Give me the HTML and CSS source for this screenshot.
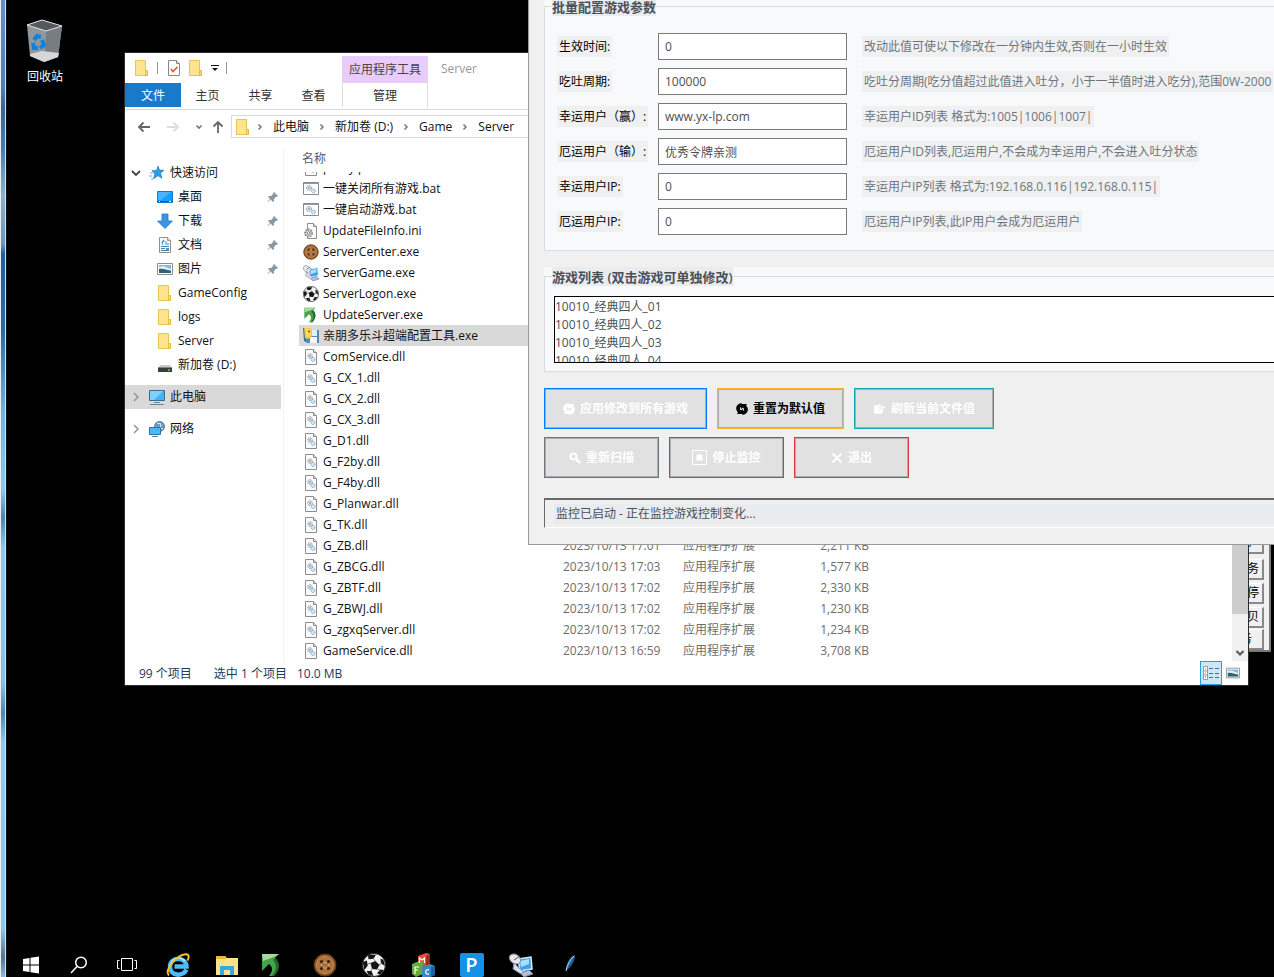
FILE: index.html
```
<!DOCTYPE html>
<html lang="zh-CN">
<head>
<meta charset="utf-8">
<title>Server</title>
<link rel="stylesheet" href="styles.css">
</head>
<body>
<svg class="sprite" aria-hidden="true">
  <symbol id="folder" viewBox="0 0 16 16"><path d="M1.500.500h10v10h2v5h-12z" fill="#ffe48f" stroke="#e8c455"/><path d="M11.500 10.500h2v5h-2z" fill="#ffdb6e" stroke="#e3bb48"/></symbol>
  <symbol id="chev" viewBox="0 0 8 8"><path d="M2.500 1.500L5 4 2.500 6.500" fill="none" stroke="#777" stroke-width="1.500"/></symbol>
  <symbol id="chev-big" viewBox="0 0 10 10"><path d="M3 1l4 4-4 4" fill="none" stroke="#999" stroke-width="1.600"/></symbol>
  <symbol id="chev-down" viewBox="0 0 10 10"><path d="M1 3l4 4 4-4" fill="none" stroke="#444" stroke-width="1.800"/></symbol>
  <symbol id="pin" viewBox="0 0 12 12"><path d="M7 1l4 4-1 1-1-.3L7 8v2L6 11 3.500 8.500 1 11l-.5-.5L3 8 1 6l1-1h2l2.500-2.500L6 2z" fill="#8b98a3"/></symbol>
  <symbol id="bat" viewBox="0 0 16 14"><path d="M.5.500h15v12H.5z" fill="#fff" stroke="#858b90"/><path d="M1 1.500h14" stroke="#999"/><circle cx="6" cy="6" r="2.500" fill="#e2e7ea" stroke="#7d8890" stroke-dasharray="1 .6"/><circle cx="6" cy="6" r=".8" fill="#667"/><circle cx="10.500" cy="9" r="2" fill="#cfe8f8" stroke="#78a6c4" stroke-dasharray="1 .5"/></symbol>
  <symbol id="dll" viewBox="0 0 16 16"><path d="M2.500.500h8l3 3v12h-11z" fill="#fbfbfb" stroke="#8c8c8c"/><path d="M10.500.500v3h3" fill="#ddd" stroke="#8c8c8c"/><circle cx="7" cy="7" r="2.300" fill="#e6eaed" stroke="#7d8890" stroke-dasharray="1 .6"/><circle cx="7" cy="7" r=".8" fill="#667"/><circle cx="10" cy="10.500" r="2" fill="#cfe8f8" stroke="#78a6c4" stroke-dasharray="1 .5"/></symbol>
  <symbol id="ini" viewBox="0 0 16 16"><path d="M4.500.500h6l3 3v12h-9z" fill="#fbfbfb" stroke="#8c8c8c"/><path d="M10.500.500v3h3" fill="#ddd" stroke="#8c8c8c"/><circle cx="5.500" cy="10" r="3.500" fill="#d5d8da" stroke="#858b90" stroke-width="2" stroke-dasharray="1.600 1"/><circle cx="5.500" cy="10" r="1.300" fill="#fff" stroke="#858b90"/></symbol>
  <symbol id="cookie" viewBox="0 0 24 24"><circle cx="12" cy="12" r="11" fill="#8e5a2e" stroke="#5b3515"/><circle cx="12" cy="12" r="8.500" fill="#ad713c" stroke="#c48a54"/><g fill="#3d220c"><circle cx="8.500" cy="8.500" r="1.600"/><circle cx="15.500" cy="8.500" r="1.600"/><circle cx="8.500" cy="15.500" r="1.600"/><circle cx="15.500" cy="15.500" r="1.600"/></g><path d="M10 9.500h4M10 15h4M8.500 11v2M15.500 11v2" stroke="#d9a670"/></symbol>
  <symbol id="ball" viewBox="0 0 24 24"><circle cx="12" cy="12" r="11.500" fill="#f2f2f2" stroke="#222"/><path d="M8.500 10l5-2 4 4-2.500 4.500-5-.5z M6 1.700l8 0-2.500 4-5 .5z M.8 9l4-1.500 1 5-3.500 4.500z M4.500 18l5 0 2 5-5-1.500z M15 20.500l3-4 4 .5-4 4.500z M18.500 5.500l3 1.500 1.500 6-4-2.500z" fill="#151515"/><path d="M13.500 8.500L11 5M17 12l3-2M15 15.500l3.500 2M10.500 15L9 18M9.500 10l-4 1" stroke="#777" fill="none"/></symbol>
  <symbol id="green" viewBox="0 0 24 24"><path d="M2 1h17l-4 4c5 4 5 12-1 18H9c4-5 4-9 0-12l-7 7z" fill="#45a449"/><path d="M2 1h17l-5 3L3 8z" fill="#a8d8a0"/><path d="M15 5c5 4 5 12-1 18h-2c5-6 5-12 1-16z" fill="#23662d"/></symbol>
  <symbol id="net-pc" viewBox="0 0 24 24"><path d="M9 6l13-2 1 12-12 2z" fill="#38a3ec" stroke="#dceaf8" stroke-width="1.500"/><path d="M11 8l9-2v5l-8 3z" fill="#a8defe"/><path d="M11 20l9-3 4 4-9 3z" fill="#b7bde0" stroke="#7980aa"/><ellipse cx="6" cy="6" rx="6" ry="4.500" transform="rotate(35 6 6)" fill="#e6e8ed" stroke="#8990a0"/><path d="M5 7l6-4" stroke="#555"/><path d="M5 10l-1 6 8 5 3-2-6-5z" fill="#d9dcea" stroke="#858aa6"/></symbol>
  <symbol id="disk" viewBox="0 0 16 16"><path d="M2 2h14v13H4L2 13z" fill="#5689b5"/><path d="M7 9h7v6H7z" fill="#f7f7f7"/><path d="M8 2h6v6H8z" fill="#e3eff6"/><path d="M0 0h3v14l-2-1z" fill="#376f9e"/><path d="M1 0h6l2 2v6l-2 2-3 1-2-1z" fill="#f8c938"/><path d="M3 1h3l2 2v4L6 9H3z" fill="#ffdc53"/><circle cx="6" cy="3.500" r="1" fill="#6a4c17"/></symbol>
  <symbol id="star" viewBox="0 0 16 16"><path d="M9 1l1.500 4 4.500.3-3.500 3 1.500 5-4-2.500-4.500 3 1.300-5L3 5.500h4.500z" fill="#299ee7" stroke="#1a73b7" stroke-width=".6"/><path d="M1 8h3M0 11h3M2 14h2" stroke="#4fb1ef"/></symbol>
  <symbol id="desk" viewBox="0 0 16 16"><path d="M.5 2.500h15v11H.5z" fill="#1c9dfb" stroke="#1579c9"/><path d="M1 3h13L4 11H1z" fill="#48b4ff"/><path d="M1 12.500h14" stroke="#155d9a"/><path d="M2 12.500h1M12 12.500h2" stroke="#fff"/></symbol>
  <symbol id="down" viewBox="0 0 16 16"><path d="M5 1h6v7h4.500L8 15.500.5 8H5z" fill="#3c94e4" stroke="#2479c5" stroke-width=".8"/></symbol>
  <symbol id="doc" viewBox="0 0 16 16"><path d="M2.500.500h8l3 3v12h-11z" fill="#fff" stroke="#8a8f94"/><path d="M10.500.500v3h3" fill="#ddd" stroke="#999"/><path d="M4.500 7h2M8 5h2M8 7h4M4 9.500h8M4 11.500h4M4 13.500h8" stroke="#3f86b8"/><path d="M9 11h3v2H9z" fill="#4c96c0"/><path d="M5 6l2-3" stroke="#3694d4" stroke-width="1.500"/></symbol>
  <symbol id="pic" viewBox="0 0 16 16"><path d="M.5 2.500h15v11H.5z" fill="#fff" stroke="#8a8f94"/><path d="M2 4h12v8H2z" fill="#86b9e8"/><path d="M2 6l4-1 8 3v1H2z" fill="#e4f0f7"/><path d="M2 8c4-1 7 1 12 2v2H2z" fill="#34636d"/></symbol>
  <symbol id="drive" viewBox="0 0 16 16"><path d="M3 8h10l2 3H1z" fill="#c9c9c9"/><path d="M1 10.500h14V15H1z" fill="#3c3c3c"/><path d="M11 13h2" stroke="#47e34a" stroke-width="1.500"/></symbol>
  <symbol id="pc" viewBox="0 0 16 16"><path d="M.5 1.500h15v10H.5z" fill="#43b3f4" stroke="#3a6e8c"/><path d="M1 2h13L5 11H1z" fill="#7fd0fb"/><path d="M5 13.500h6M1 15.500h14" stroke="#718894"/></symbol>
  <symbol id="net" viewBox="0 0 16 16"><circle cx="10.500" cy="5.500" r="5" fill="#6f9db5" stroke="#4d7f98"/><path d="M8 2l4 1-1 4 3 1M6 6l3 1" stroke="#d7edf6" fill="none"/><path d="M.5 6.500h11v7H.5z" fill="#4ab9f8" stroke="#2a75a6"/><path d="M3 15.500h6" stroke="#66808f"/></symbol>
  <symbol id="recycle" viewBox="0 0 12 12"><path d="M5.500 0C0 1-1.500 6 2 9.500L1 11h6V6L5 7.500C3 6 4 4 6 3zM6.500 12c5.500-1 7-6 3.500-9.500L11 1H5v5l2-1.500C9 6 8 8 6 9z" fill="currentColor"/></symbol>
</svg>

<main class="desktop">
  <div class="edge"></div>

  <div class="shortcut">
    <svg width="40" height="44" viewBox="0 0 40 44"><path d="M2 6l15-5 20 6-4 31-14 5-14-6z" fill="#92979a"/><path d="M21 12l16-5-4 31-13 5z" fill="#777d81"/><path d="M2 6l15-5 20 6-16 5z" fill="#55595b" stroke="#dfe2e3"/><path d="M5 35l12-3 17 2-1 4-14 5-14-6z" fill="#d5d7d9"/><g fill="none" stroke="#0884df" stroke-width="4"><path d="M9 21l3-4 4 1"/><path d="M8 24l1 5 4 0"/><path d="M17 21l2 5-4 3"/></g></svg>
    <span>回收站</span>
  </div>

  <section class="panel-window">
    <button>1</button>
    <button>务</button>
    <button>停</button>
    <button>贝</button>
    <button>务</button>
  </section>

  <section class="explorer">
    <header class="titlebar">
      <div class="quick">
        <svg width="16" height="16"><use href="#folder"/></svg>
        <i class="sep"></i>
        <svg class="check" width="14" height="16" viewBox="0 0 14 16"><path d="M1.500.500h8l3 3v12h-11z" fill="#fff" stroke="#888"/><path d="M9.500.500v3h3" fill="#ddd" stroke="#888"/><path d="M4 9l2 2.500L10.500 7" fill="none" stroke="#e2561f" stroke-width="1.600"/></svg>
        <svg width="16" height="16"><use href="#folder"/></svg>
        <svg width="8" height="8" viewBox="0 0 8 8"><path d="M0 1.500h8" stroke="#111"/><path d="M1 4h6L4 7z" fill="#111"/></svg>
        <i class="sep"></i>
      </div>
      <div class="context">应用程序工具</div>
      <div class="title">Server</div>
    </header>
    <nav class="tabs">
      <button class="tab file">文件</button>
      <button class="tab">主页</button>
      <button class="tab">共享</button>
      <button class="tab">查看</button>
      <button class="tab manage">管理</button>
    </nav>
    <div class="address">
      <div class="arrows">
        <svg width="14" height="12" viewBox="0 0 14 12"><path d="M13 6H2M6.500 1.500L2 6l4.500 4.500" fill="none" stroke="#666" stroke-width="1.800"/></svg>
        <svg width="14" height="12" viewBox="0 0 14 12"><path d="M1 6h11M7.500 1.500L12 6l-4.500 4.500" fill="none" stroke="#ddd" stroke-width="1.800"/></svg>
        <svg width="8" height="8" viewBox="0 0 8 8"><path d="M1.500 2.500L4 5l2.500-2.500" fill="none" stroke="#777" stroke-width="1.600"/></svg>
        <svg width="12" height="14" viewBox="0 0 12 14"><path d="M6 13V2M1.500 6.500L6 2l4.500 4.500" fill="none" stroke="#666" stroke-width="1.800"/></svg>
      </div>
      <div class="crumbs">
        <svg class="place" width="16" height="16"><use href="#folder"/></svg>
        <svg width="8" height="8"><use href="#chev"/></svg><span>此电脑</span>
        <svg width="8" height="8"><use href="#chev"/></svg><span>新加卷 (D:)</span>
        <svg width="8" height="8"><use href="#chev"/></svg><span>Game</span>
        <svg width="8" height="8"><use href="#chev"/></svg><span>Server</span>
      </div>
    </div>
    <div class="body">
      <ul class="tree">
        <li><svg width="10" height="10"><use href="#chev-down"/></svg><svg width="16" height="16"><use href="#star"/></svg><span>快速访问</span></li>
        <li class="sub"><svg width="16" height="16"><use href="#desk"/></svg><span>桌面</span><svg class="pin" width="12" height="12"><use href="#pin"/></svg></li>
        <li class="sub"><svg width="16" height="16"><use href="#down"/></svg><span>下载</span><svg class="pin" width="12" height="12"><use href="#pin"/></svg></li>
        <li class="sub"><svg width="16" height="16"><use href="#doc"/></svg><span>文档</span><svg class="pin" width="12" height="12"><use href="#pin"/></svg></li>
        <li class="sub"><svg width="16" height="16"><use href="#pic"/></svg><span>图片</span><svg class="pin" width="12" height="12"><use href="#pin"/></svg></li>
        <li class="sub"><svg width="16" height="16"><use href="#folder"/></svg><span>GameConfig</span></li>
        <li class="sub"><svg width="16" height="16"><use href="#folder"/></svg><span>logs</span></li>
        <li class="sub"><svg width="16" height="16"><use href="#folder"/></svg><span>Server</span></li>
        <li class="sub"><svg width="16" height="16"><use href="#drive"/></svg><span>新加卷 (D:)</span></li>
        <li class="group selected"><svg width="10" height="10"><use href="#chev-big"/></svg><svg width="16" height="16"><use href="#pc"/></svg><span>此电脑</span></li>
        <li class="group"><svg width="10" height="10"><use href="#chev-big"/></svg><svg width="16" height="16"><use href="#net"/></svg><span>网络</span></li>
      </ul>
      <table class="files">
        <thead><tr><th>名称</th></tr></thead>
        <tbody>
          <tr><td><svg width="16" height="16"><use href="#dll"/></svg>proxy.p</td></tr>
          <tr><td><svg width="16" height="14"><use href="#bat"/></svg>一键关闭所有游戏.bat</td></tr>
          <tr><td><svg width="16" height="14"><use href="#bat"/></svg>一键启动游戏.bat</td></tr>
          <tr><td><svg width="16" height="16"><use href="#ini"/></svg>UpdateFileInfo.ini</td></tr>
          <tr><td><svg width="16" height="16"><use href="#cookie"/></svg>ServerCenter.exe</td></tr>
          <tr><td><svg width="16" height="16"><use href="#net-pc"/></svg>ServerGame.exe</td></tr>
          <tr><td><svg width="16" height="16"><use href="#ball"/></svg>ServerLogon.exe</td></tr>
          <tr><td><svg class="shift" width="16" height="16"><use href="#green"/></svg>UpdateServer.exe</td></tr>
          <tr class="selected"><td><svg width="16" height="16"><use href="#disk"/></svg>亲朋多乐斗超端配置工具.exe</td></tr>
          <tr><td><svg width="16" height="16"><use href="#dll"/></svg>ComService.dll</td></tr>
          <tr><td><svg width="16" height="16"><use href="#dll"/></svg>G_CX_1.dll</td></tr>
          <tr><td><svg width="16" height="16"><use href="#dll"/></svg>G_CX_2.dll</td></tr>
          <tr><td><svg width="16" height="16"><use href="#dll"/></svg>G_CX_3.dll</td></tr>
          <tr><td><svg width="16" height="16"><use href="#dll"/></svg>G_D1.dll</td></tr>
          <tr><td><svg width="16" height="16"><use href="#dll"/></svg>G_F2by.dll</td></tr>
          <tr><td><svg width="16" height="16"><use href="#dll"/></svg>G_F4by.dll</td></tr>
          <tr><td><svg width="16" height="16"><use href="#dll"/></svg>G_Planwar.dll</td></tr>
          <tr><td><svg width="16" height="16"><use href="#dll"/></svg>G_TK.dll</td></tr>
          <tr><td><svg width="16" height="16"><use href="#dll"/></svg>G_ZB.dll</td><td>2023/10/13 17:01</td><td>应用程序扩展</td><td>2,211 KB</td></tr>
          <tr><td><svg width="16" height="16"><use href="#dll"/></svg>G_ZBCG.dll</td><td>2023/10/13 17:03</td><td>应用程序扩展</td><td>1,577 KB</td></tr>
          <tr><td><svg width="16" height="16"><use href="#dll"/></svg>G_ZBTF.dll</td><td>2023/10/13 17:02</td><td>应用程序扩展</td><td>2,330 KB</td></tr>
          <tr><td><svg width="16" height="16"><use href="#dll"/></svg>G_ZBWJ.dll</td><td>2023/10/13 17:02</td><td>应用程序扩展</td><td>1,230 KB</td></tr>
          <tr><td><svg width="16" height="16"><use href="#dll"/></svg>G_zgxqServer.dll</td><td>2023/10/13 17:02</td><td>应用程序扩展</td><td>1,234 KB</td></tr>
          <tr><td><svg width="16" height="16"><use href="#dll"/></svg>GameService.dll</td><td>2023/10/13 16:59</td><td>应用程序扩展</td><td>3,708 KB</td></tr>
        </tbody>
      </table>
      <div class="scrollbar"><div class="thumb"></div><svg width="10" height="16" viewBox="0 0 10 16"><path d="M1.500 6L5 9.500 8.500 6" fill="none" stroke="#555" stroke-width="2"/></svg></div>
    </div>
    <footer class="statusbar">
      <span class="cell">99 个项目</span><span class="cell">选中 1 个项目</span><span class="cell size">10.0 MB</span>
      <button class="view on" aria-label="详细信息"><svg width="18" height="14" viewBox="0 0 18 14"><path d="M1.500.500h4v13h-4zM1.500 5h4M1.500 9h4" fill="#fff" stroke="#999"/><path d="M3 3h1" stroke="#38c"/><path d="M3 7h1" stroke="#4a4"/><path d="M3 11h1" stroke="#c33"/><path d="M7 2.500h4M13 2.500h4M7 7.500h4M13 7.500h4M7 11.500h4M13 11.500h4" stroke="#667"/></svg></button>
      <button class="view" aria-label="大图标"><svg width="14" height="14" viewBox="0 0 16 16"><use href="#pic"/></svg></button>
    </footer>
  </section>

  <form class="tool">
    <div class="group-box">
      <fieldset class="params">
        <legend>批量配置游戏参数</legend>
        <div class="field"><label for="f1">生效时间:</label><input id="f1" value="0"><span>改动此值可使以下修改在一分钟内生效,否则在一小时生效</span></div>
        <div class="field"><label for="f2">吃吐周期:</label><input id="f2" value="100000"><span>吃吐分周期(吃分值超过此值进入吐分，小于一半值时进入吃分),范围0W-2000</span></div>
        <div class="field"><label for="f3">幸运用户（赢）:</label><input id="f3" value="www.yx-lp.com"><span>幸运用户ID列表 格式为:1005|1006|1007|</span></div>
        <div class="field"><label for="f4">厄运用户（输）:</label><input id="f4" value="优秀令牌亲测"><span>厄运用户ID列表,厄运用户,不会成为幸运用户,不会进入吐分状态</span></div>
        <div class="field"><label for="f5">幸运用户IP:</label><input id="f5" value="0"><span>幸运用户IP列表 格式为:192.168.0.116|192.168.0.115|</span></div>
        <div class="field"><label for="f6">厄运用户IP:</label><input id="f6" value="0"><span>厄运用户IP列表,此IP用户会成为厄运用户</span></div>
      </fieldset>
    </div>
    <div class="group-box">
      <fieldset class="games">
        <legend>游戏列表 (双击游戏可单独修改)</legend>
        <select size="4" aria-label="游戏列表">
          <option>10010_经典四人_01</option>
          <option>10010_经典四人_02</option>
          <option>10010_经典四人_03</option>
          <option>10010_经典四人_04</option>
        </select>
      </fieldset>
    </div>
    <div class="actions">
      <div class="action-row">
        <button type="button" class="act blue"><svg width="12" height="12"><use href="#recycle"/></svg>应用修改到所有游戏</button>
        <button type="button" class="act yellow"><svg width="12" height="12"><use href="#recycle"/></svg>重置为默认值</button>
        <button type="button" class="act teal"><svg width="13" height="12" viewBox="0 0 14 12"><path d="M1 2h4l1-1h2v2h5v2h-2l-1 2h1l-1 4H1z" fill="currentColor"/><path d="M6 4l3 1M6 7h3" stroke="#e1e1e1"/></svg>刷新当前文件值</button>
      </div>
      <div class="action-row">
        <button type="button" class="act gray"><svg width="12" height="12" viewBox="0 0 12 12"><circle cx="4.500" cy="4.500" r="3" fill="none" stroke="currentColor" stroke-width="2"/><path d="M7 7l4 4" stroke="currentColor" stroke-width="2.500"/></svg>重新扫描</button>
        <button type="button" class="act slate"><svg width="15" height="15" viewBox="0 0 15 15"><path d="M.5.500h14v14H.5z" fill="none" stroke="currentColor"/><path d="M4.500 4.500h6v6h-6z" fill="currentColor"/></svg>停止监控</button>
        <button type="button" class="act red"><svg width="12" height="12" viewBox="0 0 12 12"><path d="M1.500 1.500l9 9M10.500 1.500l-9 9" stroke="currentColor" stroke-width="2"/></svg>退出</button>
      </div>
    </div>
    <div class="monitor"><output>监控已启动 - 正在监控游戏控制变化...</output></div>
  </form>

  <nav class="taskbar">
    <button class="sys" aria-label="开始"><svg width="18" height="18" viewBox="0 0 18 18"><path d="M1 3l6.500-1v6.500H1zM8.500 1.800L17 .6v7.900H8.500zM1 9.500h6.500V16L1 15zM8.500 9.500H17v7.900l-8.500-1.200z" fill="#fff"/></svg></button>
    <button class="sys" aria-label="搜索"><svg width="18" height="18" viewBox="0 0 18 18"><circle cx="11" cy="6.500" r="5.300" fill="none" stroke="#fff" stroke-width="1.500"/><path d="M7 10.500L1 17" stroke="#fff" stroke-width="1.500"/></svg></button>
    <button class="sys" aria-label="任务视图"><svg width="20" height="16" viewBox="0 0 20 16"><path d="M4.500 1.500h11v12h-11zM2.500 3.500h-2v8h2M17.500 3.500h2v8h-2" fill="none" stroke="#fff"/></svg></button>
    <span class="gap"></span>
    <button class="app" aria-label="Internet Explorer"><svg width="24" height="24" viewBox="0 0 24 24"><path d="M20.500 16.500C17 24 4 23.500 4 13.500S20 3.500 20.500 13.500H8.500" fill="none" stroke="#4fbdf5" stroke-width="4.500"/><path d="M5 10c2-5 9-7 14-2" fill="none" stroke="#b6e6fd" stroke-width="1.500"/><path d="M3 22.500C-3 17 13-1 21.500 1.500c2 1 1 4 0 6" fill="none" stroke="#f3c22e" stroke-width="2"/></svg></button>
    <button class="app" aria-label="文件资源管理器"><svg width="24" height="24" viewBox="0 0 24 24"><path d="M1 3h9l2 2h11v17H1z" fill="#fbe08d"/><path d="M1 3h9l2 3H1z" fill="#e9b83f"/><path d="M5 13h14v9h-4v-5H9v5H5z" fill="#35a9e0"/></svg></button>
    <button class="app flush" aria-label="UpdateServer"><svg width="24" height="24"><use href="#green"/></svg></button>
    <button class="app" aria-label="ServerCenter"><svg width="24" height="24"><use href="#cookie"/></svg></button>
    <button class="app" aria-label="ServerLogon"><svg width="24" height="24"><use href="#ball"/></svg></button>
    <button class="app" aria-label="MFC"><svg width="24" height="24" viewBox="0 0 24 24"><path d="M7 3l8-3 4 1v11l-8 2-4-2z" fill="#df5037"/><path d="M15 3l4-2v11l-4 2z" fill="#a52a1c"/><path d="M1 11l7-3 4 2v11l-7 3-4-3z" fill="#65a93a"/><path d="M11 14l8-3 5 2v9l-5 2h-8z" fill="#3989c8"/><path d="M20 14l4-1v9l-4 2z" fill="#20609b"/><path d="M8.500 10V5l2.500 2 2.500-2v5M4 21v-7h4M4 17h3M18 17c-4-2-5 5 0 4" fill="none" stroke="#fff" stroke-width="1.200"/></svg></button>
    <button class="app" aria-label="P"><b class="p-logo">P</b></button>
    <button class="app" aria-label="ServerGame"><svg width="24" height="24"><use href="#net-pc"/></svg></button>
    <button class="app" aria-label="Tk"><svg width="24" height="24" viewBox="0 0 24 24"><path d="M8 18C8 10 12 3 17 2c0 6-3 11-8 15z" fill="#245f92"/><path d="M8 18c1-6 4-11 8-15" stroke="#b5d8ec" fill="none"/></svg></button>
  </nav>
</main>
</body>
</html>
```
FILE: styles.css
```
* { box-sizing: border-box; }
body {
  margin: 0;
  font-family: "Open Sans", "Noto Sans CJK SC", sans-serif;
  font-size: 12px;
  line-height: 18px;
  color: #111;
}
button, input, select { font: inherit; color: inherit; margin: 0; }
button { padding: 0; border: 0; background: none; }
svg { display: block; flex: none; }
.sprite { position: absolute; width: 0; height: 0; }

.desktop {
  position: relative;
  height: 100vh;
  min-height: 700px;
  overflow: hidden;
  background: #000;
  white-space: nowrap;
}
.edge {
  position: absolute;
  left: 0; top: 0; bottom: 0;
  width: 7px;
  border-left: 1px solid #e8f0f8;
  border-right: 1px solid #10181f;
  box-shadow: inset -1px 0 #cfe3f3;
  background: linear-gradient(#648fc6 0, #4d7fb5 9%, #3a6591 11%, #3f7eb5 15%, #8fb0c6 20%, #6d96b8 25%, #1f5fa0 26%, #2a6ba8 34%, #6fb3e0 42%, #8ccaf0 50%, #4c86b0 53%, #8ccaf0 56%, #86c0e6 70%, #4c86b0 73%, #8ccaf0 76%, #8cc8ee 95%, #58748a 98%, #87bbe0 100%);
}
.shortcut {
  position: absolute;
  left: 9px; top: 19px;
  width: 72px;
  display: flex;
  flex-direction: column;
  align-items: center;
  gap: 5px;
  color: #fff;
}

.panel-window {
  position: absolute;
  right: 3px; top: 533px;
  width: 60px;
  padding-right: 5px;
  display: flex;
  flex-direction: column;
  align-items: flex-end;
  gap: 3px;
  background: #f0f0f0;
  border-right: 2px solid #777;
  border-bottom: 2px solid #777;
}
.panel-window button {
  width: 30px;
  height: 21px;
  padding-right: 3px;
  line-height: 18px;
  text-align: right;
  color: #000;
  background: #f0f0f0;
  border-right: 2px solid #888;
  border-bottom: 2px solid #888;
  border-top: 1px solid #fff;
}
.panel-window button:first-child { margin-bottom: 2px; padding-right: 9px; }
.panel-window button:last-child { margin-top: -2px; padding-right: 10px; }

.explorer {
  position: absolute;
  left: 124px; right: 25px; top: 52px;
  border: 1px solid #2b2b2b;
  background: #fff;
}
.titlebar { display: flex; height: 30px; padding-top: 3px; }
.quick { width: 217px; display: flex; align-items: center; gap: 7px; padding: 0 0 3px 9px; }
.quick .check { margin-left: 2px; }
.quick .sep { width: 1px; height: 12px; background: #999; }
.context {
  width: 86px;
  line-height: 27px;
  text-align: center;
  background: #e9cbfc;
  color: #444;
}
.title { margin-left: 13px; line-height: 25px; color: #999; }
.tabs { display: flex; height: 27px; border-bottom: 1px solid #dadbdc; }
.tab { width: 53px; height: 24px; padding-top: 1px; color: #333; }
.file { width: 56px; background: #1979ca; color: #fff; }
.manage {
  width: 86px;
  margin-left: 2px;
  border-left: 1px solid #ddd;
  border-right: 1px solid #ddd;
}
.address { display: flex; height: 38px; padding-top: 5px; align-items: flex-start; }
.arrows { width: 106px; height: 23px; display: flex; align-items: center; gap: 15px; padding-left: 12px; }
.arrows svg:last-child { margin-left: -6px; }
.crumbs {
  flex: 1;
  height: 23px;
  display: flex;
  align-items: center;
  gap: 9px;
  padding-left: 3px;
  border: 1px solid #d9d9d9;
}
.crumbs .place { margin-right: -4px; }
.body { display: flex; height: 513px; }
.tree {
  width: 159px;
  margin: 0;
  padding: 13px 2px 0 0;
  list-style: none;
  border-right: 1px solid #f2f2f2;
}
.tree li { display: flex; align-items: center; gap: 5px; height: 24px; padding-left: 6px; }
.tree li svg + svg { margin-left: 3px; }
.tree .sub { padding-left: 32px; }
.tree .group { margin-top: 8px; }
.tree li .pin { margin: 0 2px 0 auto; }
.selected { background: #d9d9d9; }
.files { flex: 1; display: flex; flex-direction: column; }
.files thead { display: block; height: 24px; }
.files th { display: block; padding: 2px 18px; font-weight: normal; text-align: left; color: #4c607a; }
.files tbody {
  flex: 1;
  display: flex;
  flex-direction: column;
  justify-content: flex-end;
  overflow: hidden;
}
.files tr { display: block; }
.files tbody tr {
  flex: none;
  display: grid;
  grid-template-columns: 264px 120px 100px 86px;
  height: 21px;
  margin-left: 15px;
  line-height: 21px;
}
.files td { padding: 0; color: #6d6d6d; }
.files td:first-child { display: flex; align-items: center; gap: 4px; padding-left: 4px; color: #111; }
.files td:last-child:not(:first-child) { text-align: right; }
.scrollbar {
  width: 16px;
  display: flex;
  flex-direction: column;
  align-items: center;
  justify-content: flex-end;
  background: #f0f0f0;
}
.thumb { width: 100%; height: 400px; margin-bottom: 31px; background: #cdcdcd; }
.statusbar { display: flex; height: 24px; line-height: 25px; padding-right: 4px; color: #1e395b; }
.cell { margin-left: 14px; }
.cell + .cell { margin-left: 22px; }
.cell + .cell.size { margin: 0 auto 0 10px; }
.view { width: 22px; height: 24px; display: grid; place-items: center; }
.view.on { background: #cce8f6; border: 1px solid #26a0da; }

.tool {
  position: absolute;
  left: 528px; right: -48px; top: -19px;
  padding: 16px 15px;
  display: flex;
  flex-direction: column;
  gap: 16px;
  background: #f0f0f0;
  border: 1px solid #999;
  border-top: 0;
  color: #495057;
}
.group-box { background: #f8f9fb; }
fieldset { min-width: 0; margin: 0; border: 1px solid #dadde0; }
legend {
  height: 19px;
  padding: 0;
  font-size: 13px;
  line-height: 21px;
  font-weight: 600;
  background: #e9ecef;
}
.params {
  display: flex;
  flex-direction: column;
  gap: 8px;
  padding: 17px 12px 15px 7px;
}
.field { display: grid; grid-template-columns: 101px 189px 1fr; align-items: center; padding-left: 5px; }
.field label { justify-self: start; height: 21px; padding: 0 2px; line-height: 21px; background: #f0f0f0; color: #000; }
.field input { width: 189px; height: 27px; padding: 0 6px; border: 1px solid #7a7a7a; background: #fff; outline: 0; }
.field span { justify-self: start; height: 21px; margin-left: 15px; padding: 0 2px; line-height: 21px; background: #f0f0f0; color: #6c757d; }
.games { padding: 10px 8px 8px 7px; }
.games select {
  display: block;
  width: calc(100% - 2px);
  height: 67px;
  margin-left: 2px;
  padding: 0;
  overflow: hidden;
  border: 1px solid #000;
  border-radius: 0;
  background: #fff;
  outline: 0;
}
.games option { height: 18px; min-height: 18px; padding: 0; line-height: 17px; }
.actions { display: flex; flex-direction: column; gap: 8px; margin-bottom: 4px; }
.action-row { display: flex; gap: 10px; }
.act {
  display: flex;
  align-items: center;
  justify-content: center;
  gap: 5px;
  min-width: 115px;
  height: 41px;
  padding: 0 18px;
  font-weight: 700;
  color: #fff;
  background: #e1e1e1;
  border: 1px solid;
  box-shadow: inset 0 0 0 1px #adadad;
}
.act.blue { border-color: #007bff; }
.act.yellow { border-color: #f5b921; color: #000; }
.act.teal { border-color: #17a2b8; }
.act.gray { border-color: #6c757d; }
.act.slate { border-color: #dc3545; }
.act.red { border-color: #dc3545; }
.monitor {
  height: 30px;
  padding: 4px 9px 3px;
  border: 1px solid #696969;
  border-top-width: 2px;
  border-bottom: 1px solid #fff;
}
.monitor output { display: block; height: 20px; padding-left: 2px; line-height: 20px; background: #e9ecef; }

.taskbar {
  position: absolute;
  left: 7px; right: 0; bottom: 0;
  height: 24px;
  display: flex;
}
.taskbar button { height: 24px; display: grid; place-items: center; }
.sys { width: 48px; }
.app { width: 49px; }
.taskbar .flush { justify-items: start; padding-left: 9px; }
.gap { width: 2px; }
.p-logo {
  width: 24px;
  height: 24px;
  border-radius: 2px;
  background: #1592e6;
  color: #fff;
  font-size: 20px;
  line-height: 24px;
  font-weight: 600;
}
```
